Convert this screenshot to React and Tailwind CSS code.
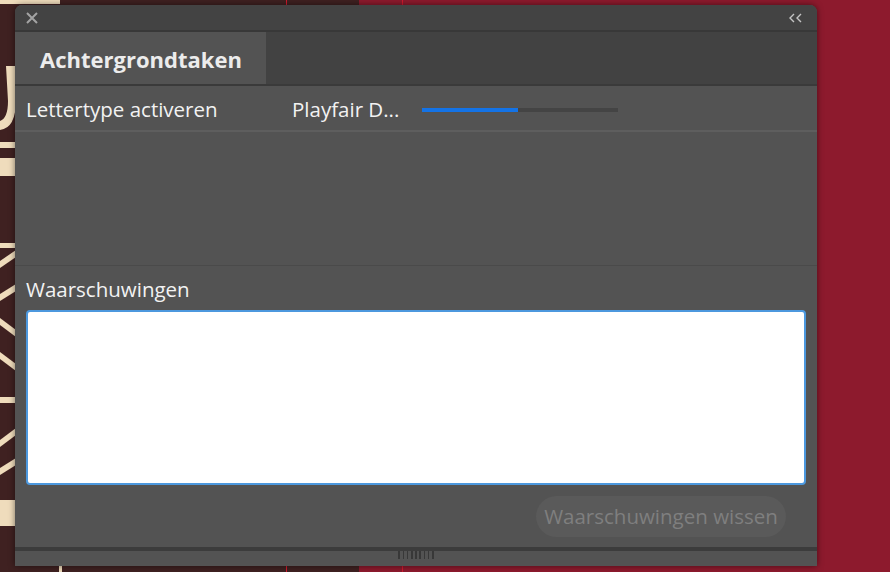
import { useState } from 'react'

function Backdrop() {
  return (
    <div className="absolute inset-0">
      <div className="absolute left-0 top-0 h-full w-[359px] bg-[#3f2121]" />
      <div className="absolute left-[286px] top-0 h-full w-px bg-[#d11a2e]" />
      <div className="absolute left-[402px] top-0 h-full w-px bg-[#d11a2e]" />
      <svg className="absolute left-0 top-0" width="80" height="572" viewBox="0 0 80 572">
        <g fill="#efdcbc">
          <rect x="0" y="0" width="60" height="4" />
          <path d="M6 66 h10 v34 q0 28 -16 30 v-9 q8 -3 8 -20 z" />
          <rect x="0" y="142" width="16" height="6" />
          <rect x="0" y="158" width="16" height="18" />
          <rect x="0" y="243" width="16" height="5" />
          <path d="M16 250 L16 257 L0 268 L0 261 Z" />
          <path d="M16 284 L16 291 L0 301 L0 294 Z" />
          <path d="M0 318 L16 330 L16 337 L0 325 Z" />
          <path d="M0 352 L16 364 L16 371 L0 359 Z" />
          <rect x="0" y="397" width="16" height="6" />
          <path d="M16 428 L16 435 L0 447 L0 440 Z" />
          <path d="M16 458 L16 465 L0 475 L0 468 Z" />
          <rect x="0" y="500" width="16" height="26" />
          <rect x="59" y="566" width="3" height="6" />
        </g>
      </svg>
    </div>
  )
}

export default function App() {
  const [progress] = useState(49)

  return (
    <div
      className="relative h-[572px] w-[890px] overflow-hidden bg-[#8d1a2d]"
      style={{ fontFamily: '"Open Sans", "Noto Sans", sans-serif' }}
    >
      <Backdrop />
      <div className="relative pl-[15px] pt-[5px]">
        <div className="flex h-[561px] w-[802px] flex-col overflow-hidden rounded-t-[7px] bg-[#535353] shadow-[0_0_6px_rgba(0,0,0,0.5)]">
          {/* title bar */}
          <div className="flex h-[25px] items-center justify-between bg-[#434343] pl-[11px] pr-[14px]">
            <svg width="12" height="12" viewBox="0 0 12 12">
              <path d="M1 1 L11 11 M11 1 L1 11" stroke="#a3a3a3" strokeWidth="2" />
            </svg>
            <svg width="14" height="10" viewBox="0 0 14 10">
              <path d="M5 1 L1 5 L5 9 M12 1 L8 5 L12 9" stroke="#c4c4c4" strokeWidth="1.4" fill="none" />
            </svg>
          </div>
          <div className="h-[2px] bg-[#383838]" />

          {/* tabs */}
          <div className="flex h-[52px] bg-[#424242]">
            <div className="flex w-[251px] items-center bg-[#535353] pl-[25px] pt-[3px] text-[22px] font-bold text-[#ececec]">
              Achtergrondtaken
            </div>
          </div>
          <div className="h-[2px] bg-[#3a3a3a]" />

          {/* task row */}
          <div className="flex h-[44px] items-center pt-[3px] text-[20.5px] font-medium text-[#f2f2f2]">
            <div className="w-[277px] pl-[11px]">Lettertype activeren</div>
            <div className="w-[130px]">Playfair D...</div>
            <div className="h-[4px] w-[196px] bg-[#444444]">
              <div className="h-full bg-[#1473e6]" style={{ width: `${progress}%` }} />
            </div>
          </div>
          <div className="h-[2px] bg-[#5e5e5e]" />

          {/* empty list area */}
          <div className="h-[133px]" />
          <div className="h-px bg-[#4a4a4a]" />

          {/* warnings */}
          <div className="flex h-[44px] items-end pb-[5px] pl-[11px] text-[20.5px] font-medium text-[#f2f2f2]">
            Waarschuwingen
          </div>
          <div className="mx-[11px] h-[175px] rounded-[4px] border-2 border-[#4c98de] bg-white" />

          <div className="flex justify-end pr-[31px] pt-[11px]">
            <button className="h-[41px] w-[250px] rounded-full bg-[#5a5a5a] text-[20.5px] font-medium text-[#7f7f7f]">
              Waarschuwingen wissen
            </button>
          </div>

          <div className="mt-[10px] h-[4px] bg-[#3c3c3c]" />
          <div className="flex flex-1 justify-center bg-[#535353]">
            <div className="flex h-[8px] gap-[2.6px]">
              {Array.from({ length: 9 }).map((_, i) => (
                <div key={i} className="h-full w-[1.6px] bg-[#383838]" />
              ))}
            </div>
          </div>
        </div>
      </div>
    </div>
  )
}
